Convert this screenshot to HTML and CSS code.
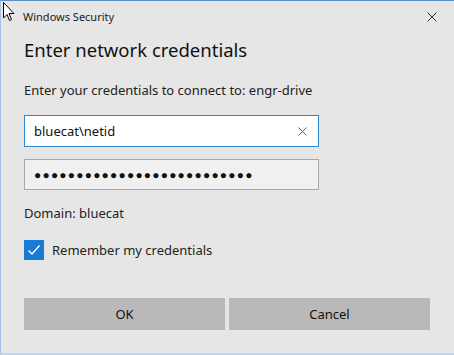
FILE: index.html
```html
<!DOCTYPE html>
<html lang="en">
<head>
    <meta charset="UTF-8">
    <title>Windows Security</title>
    <link rel="stylesheet" href="styles.css">
</head>
<body>
    <div class="window">
        <div class="titlebar">
            <span class="title">Windows Security</span>
            <svg class="close" width="10" height="10" viewBox="0 0 10 10">
                <path d="M0.5 0.5 L9.5 9.5 M9.5 0.5 L0.5 9.5" stroke="#333" stroke-width="1"/>
            </svg>
        </div>

        <div class="content">
            <h1>Enter network credentials</h1>
            <p class="info">Enter your credentials to connect to: engr-drive</p>

            <div class="field user">
                <span>bluecat\netid</span>
                <svg width="9" height="9" viewBox="0 0 9 9">
                    <path d="M0.5 0.5 L8.5 8.5 M8.5 0.5 L0.5 8.5" stroke="#666" stroke-width="1"/>
                </svg>
            </div>
            <div class="field pass">
                <span class="dots">&#x25CF;&#x25CF;&#x25CF;&#x25CF;&#x25CF;&#x25CF;&#x25CF;&#x25CF;&#x25CF;&#x25CF;&#x25CF;&#x25CF;&#x25CF;&#x25CF;&#x25CF;&#x25CF;&#x25CF;&#x25CF;&#x25CF;&#x25CF;&#x25CF;&#x25CF;&#x25CF;&#x25CF;&#x25CF;&#x25CF;</span>
            </div>

            <p class="domain">Domain: bluecat</p>

            <label class="remember">
                <span class="box">
                    <svg width="14" height="14" viewBox="0 0 14 14">
                        <path d="M1.5 7.5 L5 11 L12.5 2.5" fill="none" stroke="#fff" stroke-width="1.4"/>
                    </svg>
                </span>
                Remember my credentials
            </label>

            <div class="buttons">
                <button>OK</button>
                <button>Cancel</button>
            </div>
        </div>

        <!-- mouse pointer over the title bar -->
        <svg class="cursor" width="14" height="22" viewBox="0 0 14 22">
            <path d="M0.5 0.5 L0.5 16 L4 12.5 L6.5 18.5 L8.5 17.5 L6 11.5 L11 11.5 Z" fill="#fff" stroke="#000" stroke-width="1"/>
        </svg>
    </div>
</body>
</html>
```

FILE: styles.css
```css
body {
    margin: 0;
    font-family: "Noto Sans", "Open Sans", sans-serif;
    background-color: #e6e6e6;
}

.window {
    position: relative;
    width: 454px;
    height: 355px;
    box-sizing: border-box;
    background-color: #e6e6e6;
    border-top: 1px solid #5b8fc7;
    border-left: 1px solid #a9c3e6;
    border-bottom: 2px solid #bcd8f0;
    color: #000;
}

.titlebar {
    display: flex;
    align-items: center;
    justify-content: space-between;
    height: 31px;
    padding: 0 17px 0 22px;
}

.title {
    font-size: 11px;
    color: #222;
}

.content {
    padding: 0 23px;
}

h1 {
    margin: 0;
    padding-top: 3px;
    font-size: 18.5px;
    font-weight: normal;
    line-height: 30px;
    color: #111;
}

.info {
    margin: 16px 0 0;
    font-size: 13px;
    line-height: 18px;
    color: #222;
}

.field {
    display: flex;
    align-items: center;
    justify-content: space-between;
    width: 295px;
    height: 32px;
    box-sizing: border-box;
    padding: 0 11px 0 9px;
    font-size: 13px;
    color: #111;
}

.user {
    margin-top: 16px;
    background-color: #fff;
    border: 1px solid #2a8ad4;
}

.pass {
    margin-top: 12px;
    height: 31px;
    background-color: #f0f0f0;
    border: 1px solid #a8a8a8;
}

.dots {
    font-size: 12px;
    letter-spacing: 1.2px;
    color: #111;
}

.domain {
    margin: 14px 0 0;
    font-size: 13px;
    line-height: 18px;
    color: #222;
}

.remember {
    display: flex;
    align-items: center;
    gap: 8px;
    margin-top: 18px;
    font-size: 13px;
    color: #222;
}

.box {
    display: flex;
    align-items: center;
    justify-content: center;
    width: 20px;
    height: 20px;
    background-color: #1a7ad6;
}

.buttons {
    display: flex;
    gap: 4px;
    margin-top: 38px;
}

button {
    width: 201px;
    height: 32px;
    border: none;
    background-color: #b9b9b9;
    font-family: inherit;
    font-size: 13px;
    color: #111;
}

.cursor {
    position: absolute;
    top: 1px;
    left: 2px;
}
```
